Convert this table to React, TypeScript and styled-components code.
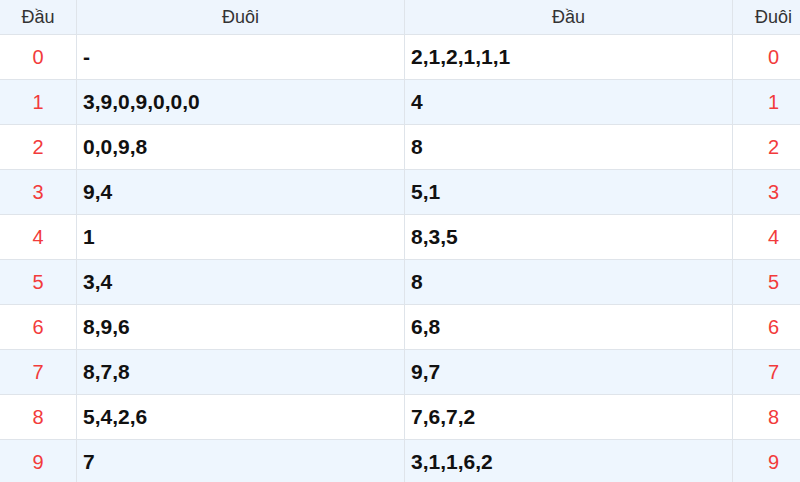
import React from "react";
import styled, { createGlobalStyle } from "styled-components";

const Global = createGlobalStyle`
  html, body { margin: 0; padding: 0; background: #fff; overflow: hidden; }
  body { font-family: "Liberation Sans", Arial, sans-serif; }
`;

const Table = styled.table`
  width: 814px;
  table-layout: fixed;
  border-collapse: separate;
  border-spacing: 0;
`;

const Col = styled.col<{ $w: number }>`
  width: ${(p) => p.$w}px;
`;

const HeadCell = styled.th<{ $last?: boolean }>`
  height: 34px;
  padding: 0;
  background: #eef5fd;
  color: #333;
  font-size: 18px;
  font-weight: normal;
  text-align: center;
  vertical-align: middle;
  border-bottom: 1px solid #dfe4ea;
  border-right: ${(p) => (p.$last ? "none" : "1px solid #dfe4ea")};
`;

const Row = styled.tr<{ $alt: boolean }>`
  background: ${(p) => (p.$alt ? "#eef6fe" : "#ffffff")};
`;

const NumCell = styled.td<{ $last?: boolean }>`
  height: 44px;
  padding: 0;
  color: #f23b3b;
  font-size: 20px;
  text-align: center;
  vertical-align: middle;
  border-bottom: 1px solid #dfe4ea;
  border-right: ${(p) => (p.$last ? "none" : "1px solid #dfe4ea")};
`;

const ValCell = styled.td`
  height: 44px;
  padding: 0 0 0 6px;
  color: #111;
  font-size: 21px;
  font-weight: bold;
  text-align: left;
  vertical-align: middle;
  border-bottom: 1px solid #dfe4ea;
  border-right: 1px solid #dfe4ea;
`;

const rows: [string, string][] = [
  ["-", "2,1,2,1,1,1"],
  ["3,9,0,9,0,0,0", "4"],
  ["0,0,9,8", "8"],
  ["9,4", "5,1"],
  ["1", "8,3,5"],
  ["3,4", "8"],
  ["8,9,6", "6,8"],
  ["8,7,8", "9,7"],
  ["5,4,2,6", "7,6,7,2"],
  ["7", "3,1,1,6,2"],
];

export default function App() {
  return (
    <>
      <Global />
      <Table>
        <colgroup>
          <Col $w={77} />
          <Col $w={328} />
          <Col $w={328} />
          <Col $w={81} />
        </colgroup>
        <thead>
          <tr>
            <HeadCell>Đầu</HeadCell>
            <HeadCell>Đuôi</HeadCell>
            <HeadCell>Đầu</HeadCell>
            <HeadCell $last>Đuôi</HeadCell>
          </tr>
        </thead>
        <tbody>
          {rows.map(([tail, head], i) => (
            <Row key={i} $alt={i % 2 === 1}>
              <NumCell>{i}</NumCell>
              <ValCell>{tail}</ValCell>
              <ValCell>{head}</ValCell>
              <NumCell $last>{i}</NumCell>
            </Row>
          ))}
        </tbody>
      </Table>
    </>
  );
}
